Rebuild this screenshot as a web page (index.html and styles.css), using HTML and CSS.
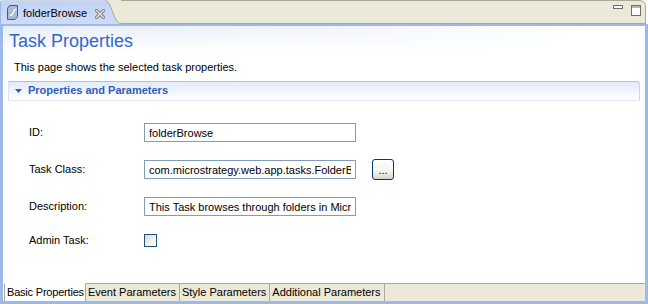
FILE: index.html
```html
<!DOCTYPE html>
<html>
<head>
<meta charset="utf-8">
<link rel="stylesheet" href="styles.css">
</head>
<body>
<div class="view">
  <div class="topbar">
    <div class="tab">
      <svg class="tab-icon" width="11" height="15" viewBox="0 0 11 15">
        <path d="M2.5 .5h8v11l-2.5 3h-7.5v-11z" fill="#a9bbd6" stroke="#4b5b72"/>
        <path d="M3 10c2 1 3-1 3.5-3s1.5-3 3-2.5" fill="none" stroke="#fff" stroke-width="1.4"/>
      </svg>
      <span class="tab-label">folderBrowse</span>
      <svg class="tab-close" width="10" height="10" viewBox="0 0 10 10">
        <path d="M1.5 1.5l7 7M8.5 1.5l-7 7" stroke="#7a7a7a" stroke-width="3.2" stroke-linecap="square"/>
        <path d="M1.5 1.5l7 7M8.5 1.5l-7 7" stroke="#e2e2e2" stroke-width="1.4" stroke-linecap="square"/>
      </svg>
    </div>
    <svg class="tab-curve" width="16" height="24" viewBox="0 0 16 24">
      <defs>
        <linearGradient id="tg" x1="0" y1="0" x2="0" y2="1">
          <stop offset="0" stop-color="#c0d3f5"/>
          <stop offset="1" stop-color="#cfdcf7"/>
        </linearGradient>
      </defs>
      <rect x="0" y="0" width="16" height="24" fill="#ece9d8"/>
      <path d="M0 0.5C7 0.5 8 23.5 16 23.5L16 24L0 24Z" fill="url(#tg)"/>
      <path d="M0 0.5C7 0.5 8 23.5 16 23.5" fill="none" stroke="#aca899"/>
    </svg>
    <div class="bar-fill">
      <svg class="win-btn" width="10" height="4" viewBox="0 0 10 4">
        <rect x=".5" y=".5" width="9" height="3" fill="#fff" stroke="#6e6e6e"/>
      </svg>
      <svg class="win-btn" width="10" height="11" viewBox="0 0 10 11">
        <rect x=".5" y=".5" width="9" height="10" fill="#fff" stroke="#6e6e6e"/>
        <path d="M0 2h10" stroke="#6e6e6e"/>
      </svg>
    </div>
  </div>

  <div class="panel">
    <div class="content">
      <div class="form-head">
        <h1 class="form-title">Task Properties</h1>
      </div>
      <p class="intro">This page shows the selected task properties.</p>
      <section class="section">
        <div class="section-head">
          <svg class="twisty" width="7" height="4" viewBox="0 0 7 4"><polygon points="0,0 7,0 3.5,4" fill="#2f5fb8"/></svg>
          <span>Properties and Parameters</span>
        </div>
        <div class="fields">
          <label class="field-label">ID:</label>
          <input class="field-input" type="text" value="folderBrowse">
          <span></span>

          <label class="field-label">Task Class:</label>
          <input class="field-input" type="text" value="com.microstrategy.web.app.tasks.FolderBrowseTask">
          <button class="browse-btn">...</button>

          <label class="field-label">Description:</label>
          <input class="field-input" type="text" value="This Task browses through folders in MicroStrategy">
          <span></span>

          <label class="field-label">Admin Task:</label>
          <span class="checkbox"></span>
          <span></span>
        </div>
      </section>
    </div>
    <div class="bottom-tabs">
      <div class="btab active">Basic Properties</div>
      <div class="btab">Event Parameters</div>
      <div class="btab">Style Parameters</div>
      <div class="btab">Additional Parameters</div>
      <div class="btab-fill"></div>
    </div>
  </div>
</div>
</body>
</html>
```

FILE: styles.css
```css
html, body {
  margin: 0;
  padding: 0;
  background: #fff;
}

body {
  font-family: "Liberation Sans", Arial, sans-serif;
  font-size: 11px;
  line-height: 13px;
  color: #000;
}

.view {
  width: 648px;
  height: 304px;
  display: flex;
  flex-direction: column;
  overflow: hidden;
}

/* ---------- top tab bar ---------- */
.topbar {
  height: 24px;
  display: flex;
  flex: none;
  padding-right: 2px;
}

.tab {
  display: flex;
  align-items: flex-start;
  height: 24px;
  box-sizing: border-box;
  padding-left: 6px;
  background: linear-gradient(#c0d3f5, #cfdcf7);
  border-top: 1px solid #d0d8e6;
  border-left: 1px solid #9fb6e0;
  border-top-left-radius: 2px;
}

.tab-icon {
  margin-top: 4px;
  flex: none;
}

.tab-label {
  margin-left: 5px;
  margin-top: 6px;
  font-size: 11px;
  line-height: 13px;
}

.tab-close {
  margin-left: 8px;
  margin-top: 8px;
  flex: none;
}

.tab-curve {
  flex: none;
  display: block;
}

.bar-fill {
  flex: 1;
  height: 24px;
  box-sizing: border-box;
  background: #ece9d8;
  border-top: 1px solid #aca899;
  border-right: 1px solid #aca899;
  border-bottom: 1px solid #aca899;
  border-top-right-radius: 6px;
  display: flex;
  justify-content: flex-end;
  align-items: flex-start;
  gap: 8px;
  padding: 4px 4px 0 0;
}

.win-btn {
  display: block;
}

/* ---------- panel ---------- */
.panel {
  flex: 1;
  display: flex;
  flex-direction: column;
  border-style: solid;
  border-color: #9db9eb;
  border-width: 2px 3px 3px 3px;
  min-height: 0;
}

.content {
  flex: 1;
  min-height: 0;
}

.form-head {
  padding: 4px 6px 0;
  background:
    linear-gradient(180deg, rgba(255,255,255,0) 0, #fff 100%),
    linear-gradient(90deg, #e6edfa 0%, #f1f5fc 55%, #fff 90%);
}

.form-title {
  margin: 0;
  font-size: 18px;
  line-height: 22px;
  font-weight: normal;
  color: #3367cc;
}

.intro {
  margin: 9px 0 0;
  padding-left: 11px;
}

/* ---------- section ---------- */
.section {
  margin: 7px 5px 0;
}

.section-head {
  display: flex;
  align-items: center;
  gap: 6px;
  padding: 2px 0 3px 6px;
  border: 1px solid;
  border-color: #a9c2ee #c2d4f3 transparent #d6e2f7;
  border-top-right-radius: 3px;
  background: linear-gradient(#e2eaf9, #fff);
  color: #2f5fb8;
  font-weight: bold;
}

.twisty {
  display: block;
  flex: none;
}

.fields {
  display: grid;
  grid-template-columns: 115px 212px auto;
  row-gap: 18px;
  align-items: center;
  justify-items: start;
  padding: 22px 0 0 21px;
}

.field-label {
  line-height: 13px;
}

.field-input {
  width: 212px;
  height: 19px;
  box-sizing: border-box;
  margin: 0;
  padding: 0 4px;
  border: 1px solid #7f9db9;
  font-family: "Liberation Sans", Arial, sans-serif;
  font-size: 11px;
  color: #000;
  background: #fff;
  outline: none;
}

.browse-btn {
  width: 22px;
  height: 21px;
  margin: -1px 0 -1px 16px;
  padding: 0 0 2px;
  box-sizing: border-box;
  border: 1px solid #003c74;
  border-radius: 3px;
  background: linear-gradient(#ffffff 0%, #f4f3ee 60%, #d8d4c6 100%);
  font-family: "Liberation Sans", Arial, sans-serif;
  font-size: 11px;
  line-height: 13px;
  color: #000;
  display: flex;
  align-items: flex-end;
  justify-content: center;
}

.checkbox {
  display: block;
  width: 13px;
  height: 13px;
  margin-top: -1px;
  box-sizing: border-box;
  border: 1px solid #1c5180;
  background: linear-gradient(135deg, #dcdcd5 0%, #f2f2ee 60%, #fff 100%);
}

/* ---------- bottom tabs ---------- */
.bottom-tabs {
  flex: none;
  height: 18px;
  display: flex;
  padding-left: 1px;
}

.btab {
  box-sizing: border-box;
  height: 18px;
  padding: 2px 3px 0 2px;
  background: #ece9d8;
  border-top: 1px solid #aca899;
  border-right: 1px solid #aca899;
  white-space: nowrap;
}

.btab.active {
  background: #fff;
  border-top-color: #fff;
  border-left: 1px solid #aca899;
  padding: 2px 1px 0 2px;
  letter-spacing: -0.2px;
}

.btab-fill {
  flex: 1;
  background: #ece9d8;
  border-top: 1px solid #aca899;
}
```
